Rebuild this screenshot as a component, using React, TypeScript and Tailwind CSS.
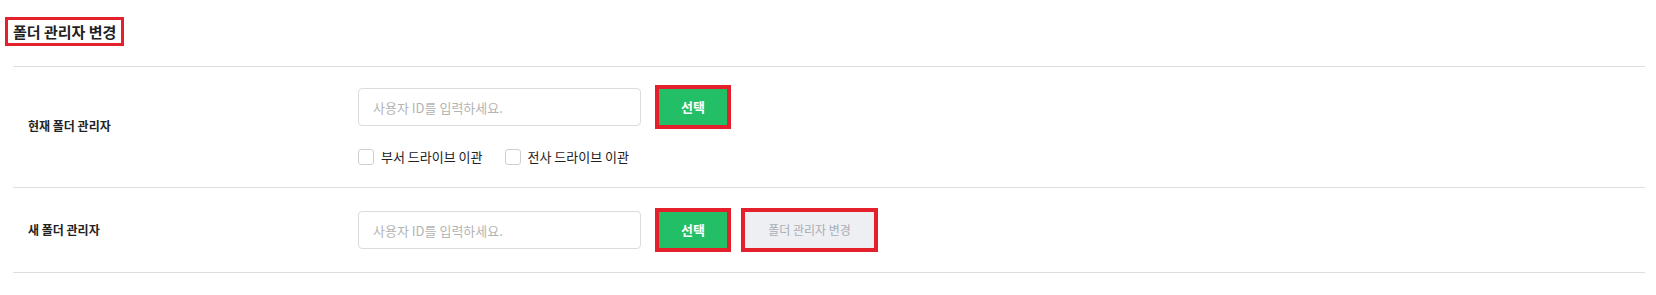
const font = { fontFamily: '"Noto Sans CJK KR", "Noto Sans", sans-serif' };

function SelectButton() {
  return (
    <div className="border-4 border-[#e3202b]">
      <button className="block h-[36px] w-[68px] bg-[#23bf67] text-[13px] font-bold text-white">
        선택
      </button>
    </div>
  );
}

function UserInput() {
  return (
    <input
      className="h-[38px] w-[283px] rounded-[4px] border border-[#dcdcdc] px-[14px] text-[13px] text-[#333] placeholder:text-[#b4b4b4] focus:outline-none"
      placeholder="사용자 ID를 입력하세요."
    />
  );
}

function Check({ label }: { label: string }) {
  return (
    <label className="flex h-[19px] items-center gap-[7px] text-[13px] text-[#222]">
      <span className="h-[16px] w-[16px] rounded-[3px] border border-[#cfcfcf] bg-white" />
      {label}
    </label>
  );
}

export default function App() {
  return (
    <div className="w-[1656px] h-[295px] bg-white" style={font}>
      <div className="pt-[17px] pl-[5px]">
        <div className="inline-block border-[3px] border-[#e3202b] px-[5px] py-[2px]">
          <h2 className="text-[15px] font-bold leading-[19px] text-[#222]">폴더 관리자 변경</h2>
        </div>
      </div>

      <div className="ml-[13px] mt-[20px] w-[1632px] border-t border-[#dedede]">
        <div className="flex items-center border-b border-[#dedede] pt-[18px] pb-[21px]">
          <div className="w-[345px] pl-[15px] text-[12px] font-bold text-[#222]">현재 폴더 관리자</div>
          <div className="flex flex-col gap-[18px]">
            <div className="flex items-center gap-[14px]">
              <UserInput />
              <SelectButton />
            </div>
            <div className="flex items-center gap-[22px]">
              <Check label="부서 드라이브 이관" />
              <Check label="전사 드라이브 이관" />
            </div>
          </div>
        </div>

        <div className="flex items-center border-b border-[#dedede] py-[20px]">
          <div className="w-[345px] pl-[15px] text-[12px] font-bold text-[#222]">새 폴더 관리자</div>
          <div className="flex items-center">
            <UserInput />
            <div className="ml-[14px]">
              <SelectButton />
            </div>
            <div className="ml-[10px] border-4 border-[#e3202b]">
              <button className="block h-[36px] w-[129px] bg-[#edeff3] text-[12px] text-[#a9adb5]">
                폴더 관리자 변경
              </button>
            </div>
          </div>
        </div>
      </div>
    </div>
  );
}
